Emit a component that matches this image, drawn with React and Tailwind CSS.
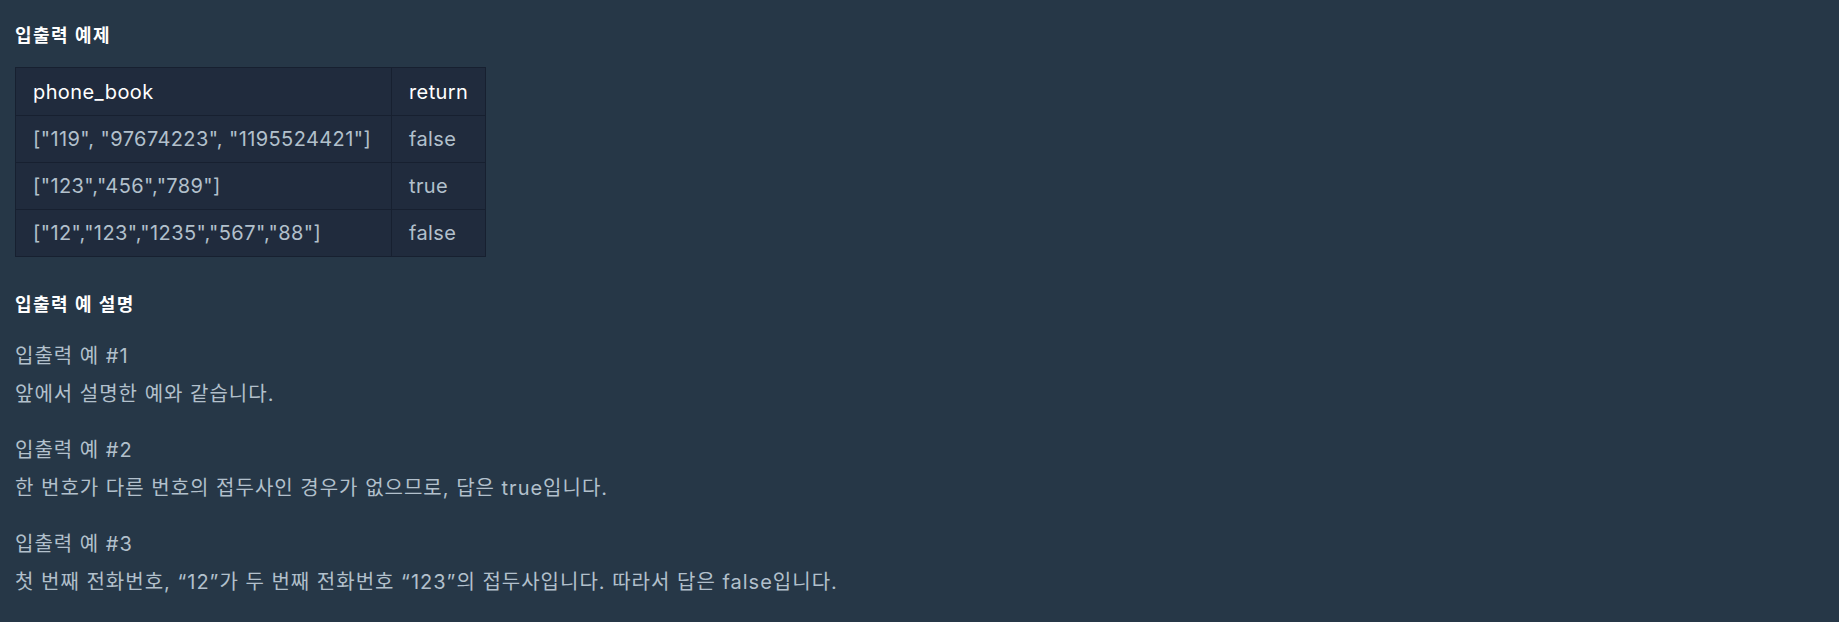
const rows = [
  ['["119", "97674223", "1195524421"]', "false"],
  ['["123","456","789"]', "true"],
  ['["12","123","1235","567","88"]', "false"],
];

const examples = [
  { title: "입출력 예 #1", body: "앞에서 설명한 예와 같습니다." },
  { title: "입출력 예 #2", body: "한 번호가 다른 번호의 접두사인 경우가 없으므로, 답은 true입니다." },
  {
    title: "입출력 예 #3",
    body: "첫 번째 전화번호, “12”가 두 번째 전화번호 “123”의 접두사입니다. 따라서 답은 false입니다.",
  },
];

export default function App() {
  return (
    <div
      className="min-h-[622px] w-full bg-[#263747] px-[15px] pt-[24px] text-[#b2c0cc]"
      style={{ fontFamily: 'Inter, "Noto Sans CJK KR", sans-serif' }}
    >
      <h5 className="text-[18px] font-bold leading-[24px] tracking-[1.5px] text-white">입출력 예제</h5>

      <table className="mt-[19px] border-collapse border border-[#172030] bg-[#202b3d] text-[20px] tracking-[0.4px]">
        <thead>
          <tr className="h-[48px]">
            <th className="w-[376px] border border-[#172030] px-[17px] text-left font-normal text-white">
              phone_book
            </th>
            <th className="border border-[#172030] px-[17px] text-left font-normal text-white">return</th>
          </tr>
        </thead>
        <tbody>
          {rows.map(([a, b]) => (
            <tr key={a} className="h-[47px]">
              <td className="border border-[#172030] px-[17px]">{a}</td>
              <td className="border border-[#172030] px-[17px]">{b}</td>
            </tr>
          ))}
        </tbody>
      </table>

      <h5 className="mt-[36px] text-[18px] font-bold leading-[24px] tracking-[1.5px] text-white">입출력 예 설명</h5>

      <div className="mt-[20px] flex flex-col gap-[18px] text-[20px] leading-[38px] tracking-[1px]">
        {examples.map((e) => (
          <div key={e.title}>
            <p>{e.title}</p>
            <p>{e.body}</p>
          </div>
        ))}
      </div>
    </div>
  );
}
